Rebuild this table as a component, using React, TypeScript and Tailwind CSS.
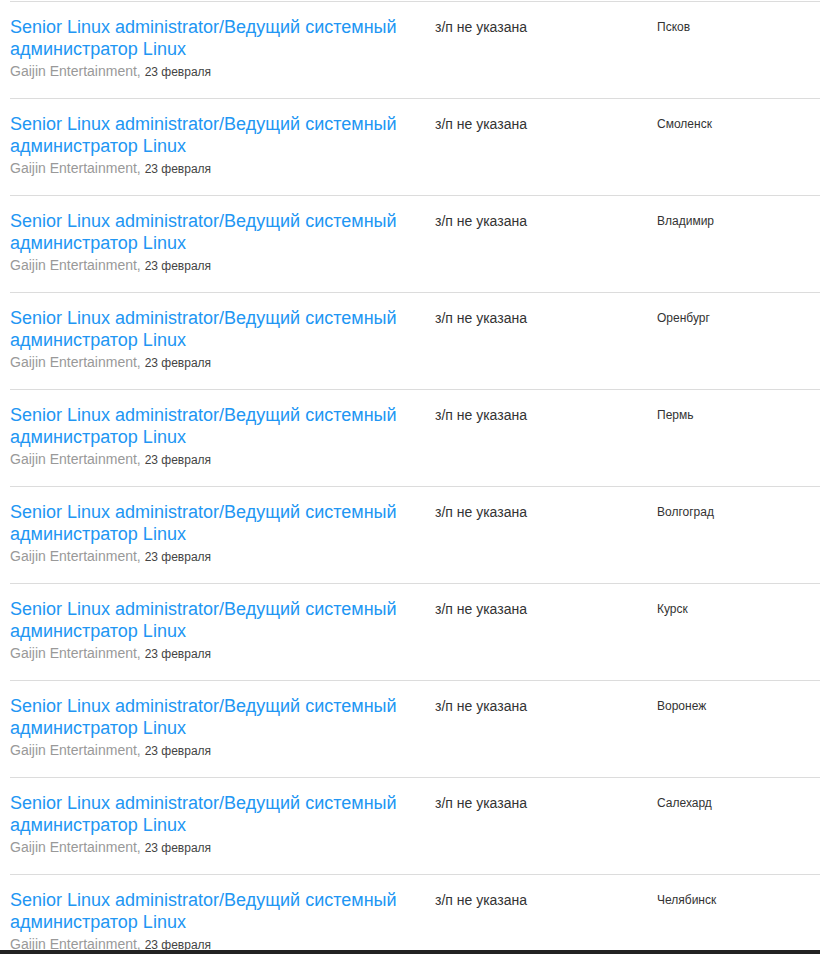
const cities = [
  "Псков",
  "Смоленск",
  "Владимир",
  "Оренбург",
  "Пермь",
  "Волгоград",
  "Курск",
  "Воронеж",
  "Салехард",
  "Челябинск",
];

const VacancyRow = ({ city }: { city: string }) => {
  return (
    <div className="flex h-[97px] border-t border-[#dcdcdc] pt-[14px]">
      <div className="w-[425px] shrink-0">
        <a
          href="#"
          className="block text-[18px] leading-[22px] text-[#2196f3]"
        >
          Senior Linux administrator/Ведущий системный администратор Linux
        </a>
        <div className="mt-[1px] text-[14px] leading-[20px] text-[#999]">
          Gaijin Entertainment,{" "}
          <span className="text-[12px] text-[#444]">23 февраля</span>
        </div>
      </div>
      <div className="w-[222px] shrink-0 pt-[1px] text-[14px] leading-[20px] text-[#333]">
        з/п не указана
      </div>
      <div className="pt-[2px] text-[12px] leading-[18px] text-[#333]">
        {city}
      </div>
    </div>
  );
};

const App = () => {
  return (
    <div className="min-h-screen bg-white pt-[1px] pl-[10px] font-['Liberation_Sans',Arial,sans-serif]">
      {cities.map((city) => (
        <VacancyRow key={city} city={city} />
      ))}
      <div className="fixed bottom-0 left-0 right-0 h-[4px] bg-[#222]" />
    </div>
  );
};

export default App;
